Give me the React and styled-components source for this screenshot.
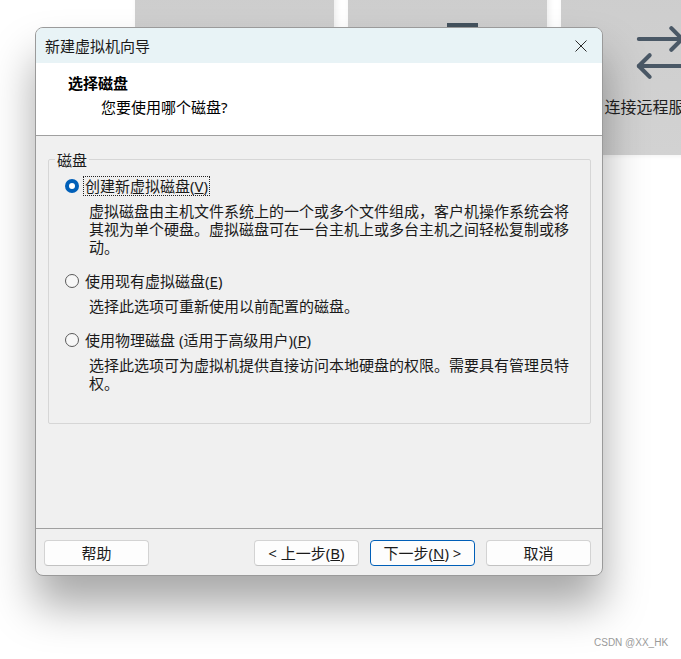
import React from 'react'
import styled, { createGlobalStyle, css } from 'styled-components'
import { ArrowRightLeft } from 'lucide-react'

const GlobalStyle = createGlobalStyle`
  html, body {
    margin: 0;
    padding: 0;
    background: #fff;
  }
  body {
    font-family: "Noto Sans", "Noto Sans CJK SC", sans-serif;
    color: #1a1a1a;
  }
`

const options = [
  {
    id: 'new',
    label: '创建新虚拟磁盘',
    key: 'V',
    checked: true,
    desc: '虚拟磁盘由主机文件系统上的一个或多个文件组成，客户机操作系统会将其视为单个硬盘。虚拟磁盘可在一台主机上或多台主机之间轻松复制或移动。',
  },
  {
    id: 'existing',
    label: '使用现有虚拟磁盘',
    key: 'E',
    desc: '选择此选项可重新使用以前配置的磁盘。',
  },
  {
    id: 'physical',
    label: '使用物理磁盘 (适用于高级用户)',
    key: 'P',
    desc: '选择此选项可为虚拟机提供直接访问本地硬盘的权限。需要具有管理员特权。',
  },
]

const DiskOption = ({ pLabel, pKey, pChecked, pDesc }) => (
  <Option>
    <OptionRow>
      <Radio pChecked={pChecked} />
      <OptionLabel pFocus={pChecked}>
        {pLabel}(<u>{pKey}</u>)
      </OptionLabel>
    </OptionRow>
    <OptionDesc>{pDesc}</OptionDesc>
  </Option>
)

export default function App() {
  return (
    <Page>
      <GlobalStyle />
      <Tiles>
        <Tile />
        <Tile>
          <svg width="65" height="65" viewBox="0 0 65 65">
            <rect x="32" y="3" width="31" height="5" fill="#44525e" />
          </svg>
        </Tile>
        <Tile>
          <ArrowRightLeft size={65} strokeWidth={1.5} color="#4a5866" />
          <TileLabel>连接远程服务器</TileLabel>
        </Tile>
      </Tiles>

      <Dialog>
        <TitleBar>
          <span>新建虚拟机向导</span>
          <CloseIcon width="12" height="12" viewBox="0 0 12 12">
            <path d="M0.5 0.5 L11.5 11.5 M11.5 0.5 L0.5 11.5" stroke="#2b2b2b" strokeWidth="1" fill="none" />
          </CloseIcon>
        </TitleBar>

        <Header>
          <HeaderTitle>选择磁盘</HeaderTitle>
          <HeaderSub>您要使用哪个磁盘?</HeaderSub>
        </Header>

        <Body>
          <GroupBox>
            <Legend>磁盘</Legend>
            {options.map((o) => (
              <DiskOption
                key={o.id}
                pLabel={o.label}
                pKey={o.key}
                pChecked={o.checked}
                pDesc={o.desc}
              />
            ))}
          </GroupBox>
        </Body>

        <Footer>
          <Boton pLeft>帮助</Boton>
          <Boton>&lt; 上一步(<u>B</u>)</Boton>
          <Boton pDefault>下一步(<u>N</u>) &gt;</Boton>
          <Boton>取消</Boton>
        </Footer>
      </Dialog>

      <Watermark>CSDN @XX_HK</Watermark>
    </Page>
  )
}

//================================STYLES===============================
const colores = {
  accent: '#005fb8',
  panel: '#f0f0f0',
  linea: '#a0a0a0',
  texto: '#1a1a1a',
}

const Page = styled.div`
  position: relative;
  width: 681px;
  height: 659px;
  overflow: hidden;
  background: #fff;
`

const Tiles = styled.div`
  display: flex;
  gap: 14px;
  padding-left: 135px;
  margin-top: -20px;
`

const Tile = styled.div`
  flex: 0 0 199px;
  height: 175px;
  box-sizing: border-box;
  border-radius: 8px;
  background: linear-gradient(180deg, #cdcdcd 0%, #d2d2d2 100%);
  box-shadow: 2px 0 6px rgba(0, 0, 0, 0.08);
  display: flex;
  flex-direction: column;
  align-items: center;
  padding-top: 40px;
`

const TileLabel = styled.div`
  margin-top: 12px;
  font-size: 16px;
  line-height: 20px;
  color: #1f1f1f;
  white-space: nowrap;
`

const Dialog = styled.div`
  position: absolute;
  left: 35px;
  top: 27px;
  width: 568px;
  height: 549px;
  box-sizing: border-box;
  display: flex;
  flex-direction: column;
  border: 1px solid #9a9a9a;
  border-radius: 8px;
  overflow: hidden;
  background: ${colores.panel};
  box-shadow: 0 30px 44px rgba(0, 0, 0, 0.34);
`

const TitleBar = styled.div`
  height: 35px;
  flex: 0 0 35px;
  display: flex;
  align-items: center;
  justify-content: space-between;
  padding: 0 15px 0 9px;
  background: #e8f3f6;
  font-size: 15px;
  color: ${colores.texto};
`

const CloseIcon = styled.svg`
  display: block;
`

const Header = styled.div`
  height: 73px;
  flex: 0 0 73px;
  box-sizing: border-box;
  background: #fff;
  border-bottom: 1px solid ${colores.linea};
  padding: 10px 0 0 32px;
`

const HeaderTitle = styled.div`
  font-size: 15px;
  line-height: 20px;
  font-weight: 700;
  color: #000;
`

const HeaderSub = styled.div`
  margin: 4px 0 0 33px;
  font-size: 15px;
  line-height: 20px;
  color: #000;
`

const Body = styled.div`
  flex: 1;
  padding: 23px 11px 0 12px;
  border-bottom: 1px solid ${colores.linea};
`

const GroupBox = styled.div`
  height: 265px;
  box-sizing: border-box;
  border: 1px solid #d6d6d6;
  border-radius: 2px;
  padding-left: 16px;
`

const Legend = styled.div`
  width: fit-content;
  margin: -10px 0 0 -10px;
  padding: 0 2px;
  background: ${colores.panel};
  font-size: 15px;
  line-height: 20px;
`

const Option = styled.div`
  margin-top: 6px;
  & + & {
    margin-top: 15px;
  }
`

const OptionRow = styled.div`
  display: flex;
  align-items: center;
  height: 20px;
  gap: 4px;
`

const Radio = styled.span`
  position: relative;
  width: 14px;
  height: 14px;
  box-sizing: border-box;
  border-radius: 50%;
  border: 1px solid #5a5a5a;
  background: #f7f7f7;

  ${(props) => props.pChecked && css`
    border: none;
    background: ${colores.accent};
    &::after {
      content: '';
      position: absolute;
      left: 4px;
      top: 4px;
      width: 6px;
      height: 6px;
      border-radius: 50%;
      background: #fff;
    }
  `}
`

const OptionLabel = styled.span`
  font-size: 15px;
  line-height: 18px;
  padding: 0 1px;
  border: 1px dotted transparent;
  white-space: nowrap;

  ${(props) => props.pFocus && css`
    border-color: #222;
  `}
`

const OptionDesc = styled.p`
  margin: 6px 0 0 24px;
  width: 486px;
  font-size: 15px;
  line-height: 18px;
  color: ${colores.texto};
`

const Footer = styled.div`
  flex: 0 0 46px;
  display: flex;
  align-items: flex-start;
  gap: 11px;
  padding: 11px 11px 0 8px;
  box-sizing: border-box;
`

const Boton = styled.button`
  width: 105px;
  height: 26px;
  box-sizing: border-box;
  font-family: inherit;
  font-size: 15px;
  line-height: 18px;
  color: ${colores.texto};
  background: #fdfdfd;
  border: 1px solid #d3d3d3;
  border-bottom-color: #c2c2c2;
  border-radius: 4px;
  padding: 0;
  cursor: pointer;

  ${(props) => props.pLeft && css`
    margin-right: auto;
  `}

  ${(props) => props.pDefault && css`
    border: 1px solid ${colores.accent};
  `}
`

const Watermark = styled.div`
  position: absolute;
  left: 594px;
  top: 637px;
  font-family: "Liberation Sans", sans-serif;
  font-size: 10px;
  color: #9a9a9a;
`
